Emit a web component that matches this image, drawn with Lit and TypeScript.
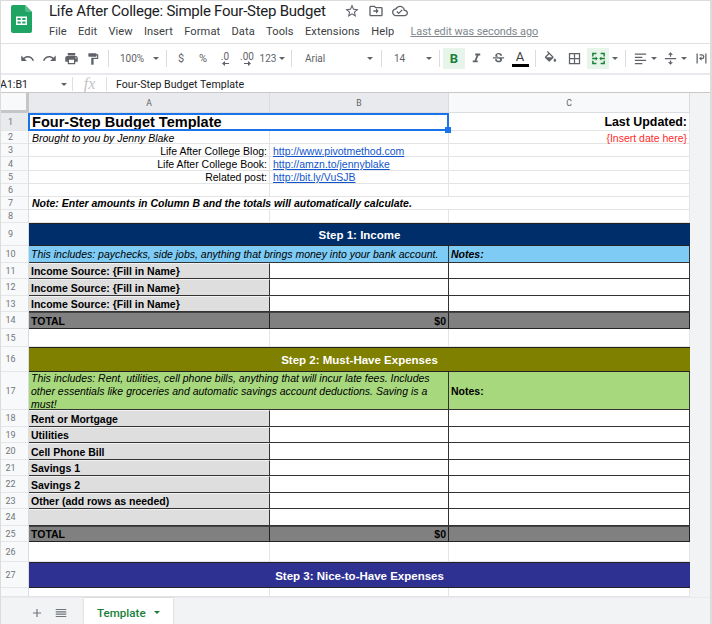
import { LitElement, html, css, svg, nothing } from "lit";
import { customElement } from "lit/decorators.js";

const P = {
  undo: "M12.5 8c-2.65 0-5.05.99-6.9 2.6L2 7v9h9l-3.62-3.62c1.39-1.16 3.16-1.88 5.12-1.88 3.54 0 6.55 2.31 7.6 5.5l2.37-.78C21.08 11.03 17.15 8 12.5 8z",
  redo: "M18.4 10.6C16.55 8.99 14.15 8 11.5 8c-4.65 0-8.58 3.03-9.96 7.22L3.9 16c1.05-3.19 4.05-5.5 7.6-5.5 1.95 0 3.73.72 5.12 1.88L13 16h9V7l-3.6 3.6z",
  print: "M19 8H5c-1.66 0-3 1.34-3 3v6h4v4h12v-4h4v-6c0-1.66-1.34-3-3-3zm-3 11H8v-5h8v5zm3-7c-.55 0-1-.45-1-1s.45-1 1-1 1 .45 1 1-.45 1-1 1zm-1-9H6v4h12V3z",
  paint: "M18 4V3c0-.55-.45-1-1-1H5c-.55 0-1 .45-1 1v4c0 .55.45 1 1 1h12c.55 0 1-.45 1-1V6h1v4H9v11c0 .55.45 1 1 1h2c.55 0 1-.45 1-1v-9h8V4h-3z",
  star: "M22 9.24l-7.19-.62L12 2 9.19 8.63 2 9.24l5.46 4.73L5.82 21 12 17.27 18.18 21l-1.63-7.03L22 9.24zM12 15.4l-3.76 2.27 1-4.28-3.32-2.88 4.38-.38L12 6.1l1.71 4.04 4.38.38-3.32 2.88 1 4.28L12 15.4z",
  folder: "M20 6h-8l-2-2H4c-1.1 0-2 .9-2 2v12c0 1.1.9 2 2 2h16c1.1 0 2-.9 2-2V8c0-1.1-.9-2-2-2zm0 12H4V6h5.17l2 2H20v10zm-8-2l4-4-4-4v3H8v2h4v3z",
  cloud: "M19.35 10.04C18.67 6.59 15.64 4 12 4 9.11 4 6.6 5.64 5.35 8.04 2.34 8.36 0 10.91 0 14c0 3.31 2.69 6 6 6h13c2.76 0 5-2.24 5-5 0-2.64-2.05-4.78-4.65-4.96zM19 18H6c-2.21 0-4-1.79-4-4 0-2.05 1.53-3.76 3.56-3.97l1.07-.11.5-.95C8.08 7.14 9.94 6 12 6c2.62 0 4.88 1.86 5.39 4.43l.3 1.5 1.53.11c1.56.1 2.78 1.41 2.78 2.96 0 1.65-1.35 3-3 3zm-9-3.82l-2.09-2.09L6.5 13.5 10 17l6.01-6.01-1.41-1.41z",
  italic: "M10 4v3h2.21l-3.42 8H6v3h8v-3h-2.21l3.42-8H18V4z",
  strike: "M6.85 7.08C6.85 4.37 9.45 3 12.24 3c1.64 0 3 .49 3.9 1.28.77.65 1.46 1.73 1.46 3.24h-3.01c0-.31-.05-.59-.15-.85-.29-.86-1.2-1.28-2.25-1.28-1.86 0-2.34 1.02-2.34 1.7 0 .48.25.88.74 1.21.38.25.77.48 1.41.7H7.39c-.21-.34-.54-.89-.54-1.92zM21 12v-2H3v2h9.62c1.15.45 1.96.75 1.96 1.97 0 1-.81 1.67-2.28 1.67-1.54 0-2.93-.54-2.93-2.51H6.4c0 .55.08 1.13.24 1.58.81 2.29 3.29 3.3 5.67 3.3 2.27 0 5.3-.89 5.3-4.05 0-.3-.01-1.16-.48-1.96H21z",
  fill: "M16.56 8.94L7.62 0 6.21 1.41l2.38 2.38-5.15 5.15c-.59.59-.59 1.54 0 2.12l5.5 5.5c.29.29.68.44 1.06.44s.77-.15 1.06-.44l5.5-5.5c.59-.58.59-1.53 0-2.12zM5.21 10L10 5.21 14.79 10H5.21zM19 11.5s-2 2.17-2 3.5c0 1.1.9 2 2 2s2-.9 2-2c0-1.33-2-3.5-2-3.5z",
  borders: "M3 3v18h18V3H3zm8 16H5v-6h6v6zm0-8H5V5h6v6zm8 8h-6v-6h6v6zm0-8h-6V5h6v6z",
  merge: "M3 4h6v2H5v3H3V4zm12 0h6v5h-2V6h-4V4zM3 15h2v3h4v2H3v-5zm16 0h2v5h-6v-2h4v-3zM3 11h5V9l3 3-3 3v-2H3v-2zm18 0v2h-5v2l-3-3 3-3v2h5z",
  align: "M3 4h18v2H3V4zm0 5h12v2H3V9zm0 5h18v2H3v-2zm0 5h12v2H3v-2z",
  valign: "M3 11h18v2H3v-2zm9-9l4 4h-3v3h-2V6H8l4-4zm0 20l-4-4h3v-3h2v3h3l-4 4z",
  wrap: "M4 4h2v16H4V4zm14 0h2v16h-2V4zM9 11h3.5a2 2 0 1 0 0-4H9V5h3.5a4 4 0 0 1 0 8H12v2.5L8 12l4-3.5V11z",
  plus: "M19 13h-6v6h-2v-6H5v-2h6V5h2v6h6v2z",
  list: "M3 5h18v2H3V5zm0 4h18v2H3V9zm0 4h18v2H3v-2zm0 4h18v2H3v-2z",
};

const icon = (d: string, cls = "") =>
  html`<svg class="ic ${cls}" viewBox="0 0 24 24">${svg`<path d=${d}></path>`}</svg>`;
const caret = html`<i class="caret"></i>`;

type Cell = { t?: string; c?: string };
type Row = { n: number | string; h: number; cells: Cell[]; sel?: boolean };

const blk = (t: string, h: number, n: number): Row => ({
  n, h, cells: [{ t, c: "lab bb" }, { c: "bb" }, { c: "bb" }],
});
const tot = (h: number, n: number): Row => ({
  n, h, cells: [{ t: "TOTAL", c: "tot" }, { t: "$0", c: "tot r" }, { c: "tot" }],
});
const plain = (n: number | string, h: number): Row => ({ n, h, cells: [{ c: "g" }, { c: "g" }, { c: "g" }] });
const LINKS: Record<number, string> = {
  3: "http://www.pivotmethod.com",
  4: "http://amzn.to/jennyblake",
  5: "http://bit.ly/VuSJB",
};
const info = (n: number, h: number, t: string, x = ""): Row => ({
  n, h, cells: [{ t, c: `g r ${x}` }, { t: LINKS[n], c: `g link ${x}` }, { c: "g" }],
});

const ROWS: Row[] = [
  { n: 1, h: 18, sel: true, cells: [{ t: "Four-Step Budget Template", c: "span2 title selc" }, { t: "Last Updated:", c: "g r upd" }] },
  { n: 2, h: 13, cells: [{ t: "Brought to you by Jenny Blake", c: "g it" }, { c: "g" }, { t: "{Insert date here}", c: "g r red" }] },
  info(3, 13, "Life After College Blog:"),
  info(4, 14, "Life After College Book:"),
  info(5, 13, "Related post:", "np"),
  plain(6, 13),
  { n: 7, h: 13, cells: [{ t: "Note: Enter amounts in Column B and the totals will automatically calculate.", c: "span3 g bi np" }] },
  plain(8, 13),
  { n: 9, h: 23, cells: [{ t: "Step 1: Income", c: "span3 band navy" }] },
  { n: 10, h: 17, cells: [{ t: "This includes: paychecks, side jobs, anything that brings money into your bank account.", c: "span2 sky it bb" }, { t: "Notes:", c: "sky bi bb" }] },
  blk("Income Source: {Fill in Name}", 16, 11),
  blk("Income Source: {Fill in Name}", 17, 12),
  blk("Income Source: {Fill in Name}", 16, 13),
  tot(17, 14),
  plain(15, 18),
  { n: 16, h: 25, cells: [{ t: "Step 2: Must-Have Expenses", c: "span3 band olive" }] },
  { n: 17, h: 38, cells: [{ t: "This includes: Rent, utilities, cell phone bills, anything that will incur late fees. Includes other essentials like groceries and automatic savings account deductions. Saving is a must!", c: "span2 lime it wrapt bb" }, { t: "Notes:", c: "lime bold bb" }] },
  blk("Rent or Mortgage", 17, 18),
  blk("Utilities", 16, 19),
  blk("Cell Phone Bill", 17, 20),
  blk("Savings 1", 16, 21),
  blk("Savings 2", 17, 22),
  blk("Other (add rows as needed)", 16, 23),
  blk("", 17, 24),
  tot(16, 25),
  plain(26, 20),
  { n: 27, h: 26, cells: [{ t: "Step 3: Nice-to-Have Expenses", c: "span3 band indigo" }] },
  plain("", 9),
];

const MENU = ["File", "Edit", "View", "Insert", "Format", "Data", "Tools", "Extensions", "Help"];

@customElement("app-root")
export class AppRoot extends LitElement {
  static styles = css`
    :host { display: block; width: 712px; height: 624px; overflow: hidden; background: #fff; position: relative; font-family: "Liberation Sans", Arial, sans-serif; box-sizing: border-box; border: solid #dcdcdc; border-width: 1px 2px 0 1px; }
    * { box-sizing: border-box; }
    .app { display: flex; flex-direction: column; height: 623px; margin-left: -1px; }
    .ic { width: 15px; height: 15px; fill: #5f6368; display: block; flex: none; }
    .caret { display: block; width: 0; height: 0; border: 3px solid transparent; border-top: 3.5px solid #5f6368; border-bottom: 0; flex: none; }

    .head { height: 43px; display: flex; flex: none; border-bottom: 1px solid #dfe1e5; }
    .logo { width: 21px; height: 28px; margin: 4px 0 0 11px; flex: none; }
    .titles { margin-left: 17px; display: flex; flex-direction: column; }
    .doc { display: flex; align-items: center; height: 20px; font: 400 15px/20px Roboto, sans-serif; letter-spacing: -.25px; color: #202124; }
    .doc .ics { display: flex; gap: 8px; margin-left: 18px; }
    .doc .ic { width: 16px; height: 16px; }
    .menu { display: flex; align-items: center; height: 17px; margin-top: 2px; font: 400 11.1px/17px Roboto, sans-serif; color: #3c4043; gap: 11.2px; letter-spacing: .1px; }
    .last { margin-left: 5px; color: #80868b; text-decoration: underline; letter-spacing: -.05px; font-size: 10.9px; }

    .tools { height: 31px; flex: none; display: flex; align-items: center; padding-left: 16px; border-bottom: 2px solid #e8eaed; color: #5f6368; font: 400 10px Roboto, sans-serif; }
    .b { height: 21px; width: 22px; display: flex; align-items: center; justify-content: center; flex: none; gap: 3px; }
    .sep { width: 1px; height: 17px; background: #dadce0; margin: 0 3px 0 4px; flex: none; }
    .w50 { width: 50px; justify-content: space-between; padding: 0 3px 0 8px; }
    .wf { width: 82px; justify-content: space-between; padding: 0 4px 0 10px; }
    .ws { width: 50px; justify-content: space-between; padding: 0 3px 0 9px; }
    .w29 { width: 29px; }
    .w26 { width: 26px; }
    .w31 { width: 31px; }
    .w30 { width: 30px; }
    .w12 { width: 12px; }
    .on { background: #e6f4ea; }
    .bold-b { font: 700 13px Roboto, sans-serif; color: #188038; }
    .bi-col { flex-direction: column; gap: 0; }
    .txta { font: 400 13px/13px Roboto, sans-serif; color: #3c4043; }
    .bar { width: 17px; height: 3px; background: #000; margin-top: 1px; }
    .dec { flex-direction: column; gap: 0; font-size: 10px; line-height: 9px; }
    .arr { width: 7px; height: 5px; fill: #5f6368; display: block; }
    .mon { font-size: 11px; }
    .ic.s13 { width: 14px; height: 14px; }
    .ic.green { fill: #188038; width: 17px; height: 17px; }

    .fx { height: 18px; flex: none; display: flex; align-items: center; padding-top: 1px; font: 400 10.6px Roboto, sans-serif; color: #202124; border-bottom: 1px solid #c8c8c8; }
    .ref { width: 73px; display: flex; align-items: center; justify-content: space-between; padding-right: 5px; border-right: 1px solid #e0e0e0; height: 14px; }
    .fxi { width: 34px; text-align: center; font: italic 16px "Liberation Serif", serif; color: #c4c4c4; border-right: 1px solid #e0e0e0; height: 14px; line-height: 13px; }
    .ftext { margin-left: 9px; }

    .sheet { flex: 1; min-height: 0; display: flex; flex-direction: column; background: #f1f3f4; }
    .cols { display: grid; grid-template-columns: 29px 241px 179px 241px 22px; height: 20px; flex: none; }
    .cols > div { display: flex; align-items: center; justify-content: center; font: 400 8.6px Roboto, sans-serif; color: #5f6368; background: #f8f9fa; border-right: 1px solid #dadce0; border-bottom: 1px solid #dadce0; }
    .cols .corner { border-right: 3px solid #c4c7c5; border-bottom: 3px solid #c4c7c5; background: #f8f9fa; }
    .cols .hl { background: #e8eaed; }
    .cols .gut { background: #f1f3f4; border: 0; }
    .row { display: grid; grid-template-columns: 29px 241px 179px 241px 22px; grid-template-rows: minmax(0, 1fr); flex: none; }
    .num { display: flex; align-items: center; justify-content: center; padding-right: 7px; font: 400 9px Roboto, sans-serif; color: #70757a; background: #f8f9fa; border-right: 1px solid #dadce0; border-bottom: 1px solid #e4e6e8; }
    .num.hl { background: #e8eaed; }
    .gut2 { background: #f1f3f4; }
    .c { display: flex; align-items: center; padding: 0 2px; font-size: 10.5px; color: #000; white-space: nowrap; min-width: 0; min-height: 0; background: #fff; position: relative; }
    .g { align-items: flex-start; border-right: 1px solid #e4e4e4; border-bottom: 1px solid #e4e4e4; padding: 1px 2px 0 3px; }
    .np { padding-top: 0; }
    .r { justify-content: flex-end; }
    .it { font-style: italic; }
    .bold { font-weight: 700; }
    .bi { font-weight: 700; font-style: italic; }
    .link { color: #1155cc; text-decoration: underline; padding-left: 3px; }
    .red { color: #ff2a2a; }
    .upd { align-items: center; font-weight: 700; font-size: 12.4px; padding-top: 0; }
    .title { font-size: 14.55px; font-weight: 700; }
    .selc { padding-left: 3px; }
    .sel-frame { position: absolute; inset: 0 0 0 -1px; border: 2px solid #1a73e8; pointer-events: none; }
    .handle { position: absolute; right: -4px; bottom: -4px; width: 6px; height: 6px; background: #1a73e8; z-index: 2; }
    .span2 { grid-column: span 2; }
    .span3 { grid-column: span 3; }
    .band { justify-content: center; color: #fff; font-weight: 700; font-size: 11.5px; border-top: 1px solid #222; border-bottom: 1px solid #222; padding-top: 1px; }
    .navy { background: #002e6b; }
    .olive { background: #808000; }
    .indigo { background: #2e3192; }
    .sky { background: #7ecbf5; }
    .lime { background: #a7d87e; }
    .wrapt { white-space: normal; line-height: 13px; align-items: flex-start; }
    .bb { border-right: 1px solid #333; border-bottom: 1px solid #333; }
    .lab { background: #dedede; font-weight: 700; border-top: 1px solid #f2f2f2; }
    .tot { background: #808080; font-weight: 700; border-right: 1px solid #222; border-bottom: 1px solid #222; border-top: 1px solid #444; }

    .tabs { flex: 1; min-height: 0; background: #f1f3f4; display: flex; align-items: stretch; border-top: 1px solid #e8eaed; }
    .tabs .ic { width: 14px; height: 14px; fill: #70757a; }
    .tb-ic { display: flex; align-items: center; gap: 10px; margin-left: 30px; width: 54px; padding-top: 3px; }
    .tab { width: 89px; background: #fff; display: flex; align-items: center; gap: 8px; padding: 3px 0 0 13px; font: 500 11.6px Roboto, sans-serif; color: #188038; box-shadow: 0 0 2px rgba(0,0,0,.2); }
    .tab .caret { border-top-color: #188038; }
  `;

  private renderRow(r: Row) {
    return html`<div class="row" style="height:${r.h}px">
      <div class="num ${r.sel ? "hl" : ""}">${r.n}</div>
      ${r.cells.map(
        (c) => html`<div class="c ${c.c ?? ""}">
          ${c.t ?? nothing}
          ${(c.c ?? "").includes("selc") ? html`<div class="sel-frame"><div class="handle"></div></div>` : nothing}
        </div>`
      )}
      <div class="gut2"></div>
    </div>`;
  }

  render() {
    return html`<div class="app">
      <div class="head">
        <svg class="logo" viewBox="0 0 21 28">
          <path d="M2 0h12l7 7v19a2 2 0 0 1-2 2H2a2 2 0 0 1-2-2V2a2 2 0 0 1 2-2z" fill="#1fa463"></path>
          <path d="M14 0l7 7h-5a2 2 0 0 1-2-2z" fill="#57bb8a"></path>
          <path d="M5 11.5h11v8.5H5zm1.5 1.5v2h3.2v-2zm4.8 0v2h3.2v-2zm-4.8 3.5v2h3.2v-2zm4.8 0v2h3.2v-2z" fill="#fff" fill-rule="evenodd"></path>
        </svg>
        <div class="titles">
          <div class="doc">
            <span>Life After College: Simple Four-Step Budget</span>
            <div class="ics">${icon(P.star)}${icon(P.folder)}${icon(P.cloud)}</div>
          </div>
          <div class="menu">
            ${MENU.map((m) => html`<span>${m}</span>`)}
            <span class="last">Last edit was seconds ago</span>
          </div>
        </div>
      </div>

      <div class="tools">
        <div class="b">${icon(P.undo)}</div>
        <div class="b">${icon(P.redo)}</div>
        <div class="b">${icon(P.print)}</div>
        <div class="b">${icon(P.paint, "s13")}</div>
        <div class="sep"></div>
        <div class="b w50"><span>100%</span>${caret}</div>
        <div class="sep"></div>
        <div class="b mon">$</div>
        <div class="b mon">%</div>
        <div class="b dec"><span>.0</span><svg class="arr" viewBox="0 0 7 5"><path d="M0 2.5L3 0v2h4v1H3v2z"></path></svg></div>
        <div class="b dec"><span>.00</span><svg class="arr" viewBox="0 0 7 5"><path d="M7 2.5L4 0v2H0v1h4v2z"></path></svg></div>
        <div class="b w29"><span>123</span>${caret}</div>
        <div class="sep"></div>
        <div class="b wf"><span>Arial</span>${caret}</div>
        <div class="sep"></div>
        <div class="b ws"><span>14</span>${caret}</div>
        <div class="sep"></div>
        <div class="b on bold-b">B</div>
        <div class="b">${icon(P.italic)}</div>
        <div class="b">${icon(P.strike)}</div>
        <div class="b bi-col"><span class="txta">A</span><div class="bar"></div></div>
        <div class="sep"></div>
        <div class="b">${icon(P.fill)}</div>
        <div class="b w26">${icon(P.borders)}</div>
        <div class="b on">${icon(P.merge, "green")}</div>
        <div class="b w12">${caret}</div>
        <div class="sep"></div>
        <div class="b w31">${icon(P.align)}${caret}</div>
        <div class="b w30">${icon(P.valign)}${caret}</div>
        <div class="b">${icon(P.wrap)}</div>
      </div>

      <div class="fx">
        <div class="ref"><span>A1:B1</span>${caret}</div>
        <div class="fxi">fx</div>
        <span class="ftext">Four-Step Budget Template</span>
      </div>

      <div class="sheet">
        <div class="cols">
          <div class="corner"></div>
          <div class="hl">A</div>
          <div class="hl">B</div>
          <div>C</div>
          <div class="gut"></div>
        </div>
        ${ROWS.map((r) => this.renderRow(r))}
        <div class="tabs">
          <div class="tb-ic">${icon(P.plus)}${icon(P.list)}</div>
          <div class="tab"><span>Template</span>${caret}</div>
        </div>
      </div>
    </div>`;
  }
}
